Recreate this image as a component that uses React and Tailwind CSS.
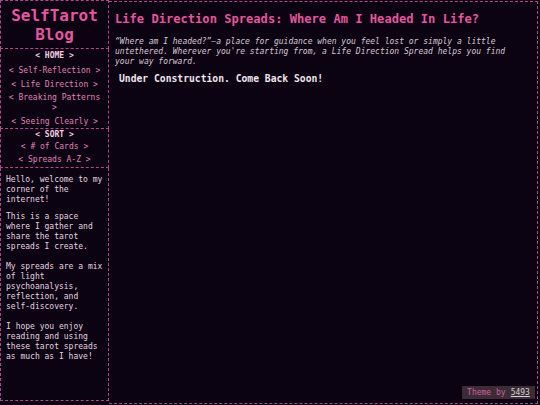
import React from 'react';

const navLinks = ['Self-Reflection', 'Life Direction', 'Breaking Patterns', 'Seeing Clearly'];
const sortLinks = ['# of Cards', 'Spreads A-Z'];

export default function App() {
  return (
    <div
      className="relative w-[540px] h-[405px] overflow-hidden bg-[#0c0312] flex items-start text-[8px] leading-[10px]"
      style={{ fontFamily: '"DejaVu Sans Mono", "Liberation Mono", monospace' }}
    >
      {/* Sidebar */}
      <aside className="w-[109px] h-[401px] flex flex-col shrink-0">
        <div className="border border-dashed border-[#b8428c] pt-[5px] pb-[4px] text-center">
          <h1 className="text-[16px] leading-[19px] font-bold text-[#e6559e]">SelfTarot Blog</h1>
        </div>

        <nav className="border-x border-b border-dashed border-[#b8428c] pt-[2px] pb-[1px] px-[4px] text-center flex flex-col gap-[3.5px]">
          <a className="font-bold text-[#f3cde3] mb-[1.5px]">&lt; HOME &gt;</a>
          {navLinks.map((l) => (
            <a key={l} className="text-[#e082b8]">&lt; {l} &gt;</a>
          ))}
        </nav>

        <nav className="border-x border-b border-dashed border-[#b8428c] pt-[1px] pb-[2px] text-center flex flex-col gap-[2.5px]">
          <a className="font-bold text-[#f3cde3]">&lt; SORT &gt;</a>
          {sortLinks.map((l) => (
            <a key={l} className="text-[#e082b8]">&lt; {l} &gt;</a>
          ))}
        </nav>

        <div className="flex-1 border-x border-b border-dashed border-[#b8428c] px-[5px] pt-[7px] text-[#e6d5e0]">
          <p>Hello, welcome to my corner of the internet!</p>
          <p className="mt-[7px]">This is a space where I gather and share the tarot spreads I create.</p>
          <p className="mt-[10px]">My spreads are a mix of light psychoanalysis, reflection, and self-discovery.</p>
          <p className="mt-[10px]">I hope you enjoy reading and using these tarot spreads as much as I have!</p>
        </div>
      </aside>

      {/* Main */}
      <main className="mt-px w-[429px] h-[403px] border border-l-0 border-dashed border-[#b8428c] pl-[6px] pr-[20px] pt-[10px]">
        <h2 className="text-[12.1px] leading-[15px] font-bold text-[#e6559e] whitespace-nowrap">
          Life Direction Spreads: Where Am I Headed In Life?
        </h2>
        <p className="mt-[10px] italic text-[#d8c8d4]">
          “Where am I headed?”—a place for guidance when you feel lost or simply a little untethered. Wherever
          you're starting from, a Life Direction Spread helps you find your way forward.
        </p>
        <h3 className="mt-[6px] pl-[4px] text-[9.7px] leading-[12px] font-bold text-[#f0e6ee]">
          Under Construction. Come Back Soon!
        </h3>
      </main>

      <div className="absolute left-[462px] top-[386px] w-[73px] h-[13px] bg-[#3b2c35] flex items-center justify-center gap-[5px]">
        <span className="text-[#d0609f]">Theme by</span>
        <span className="text-[#d8d0d4] underline">5493</span>
      </div>
    </div>
  );
}
